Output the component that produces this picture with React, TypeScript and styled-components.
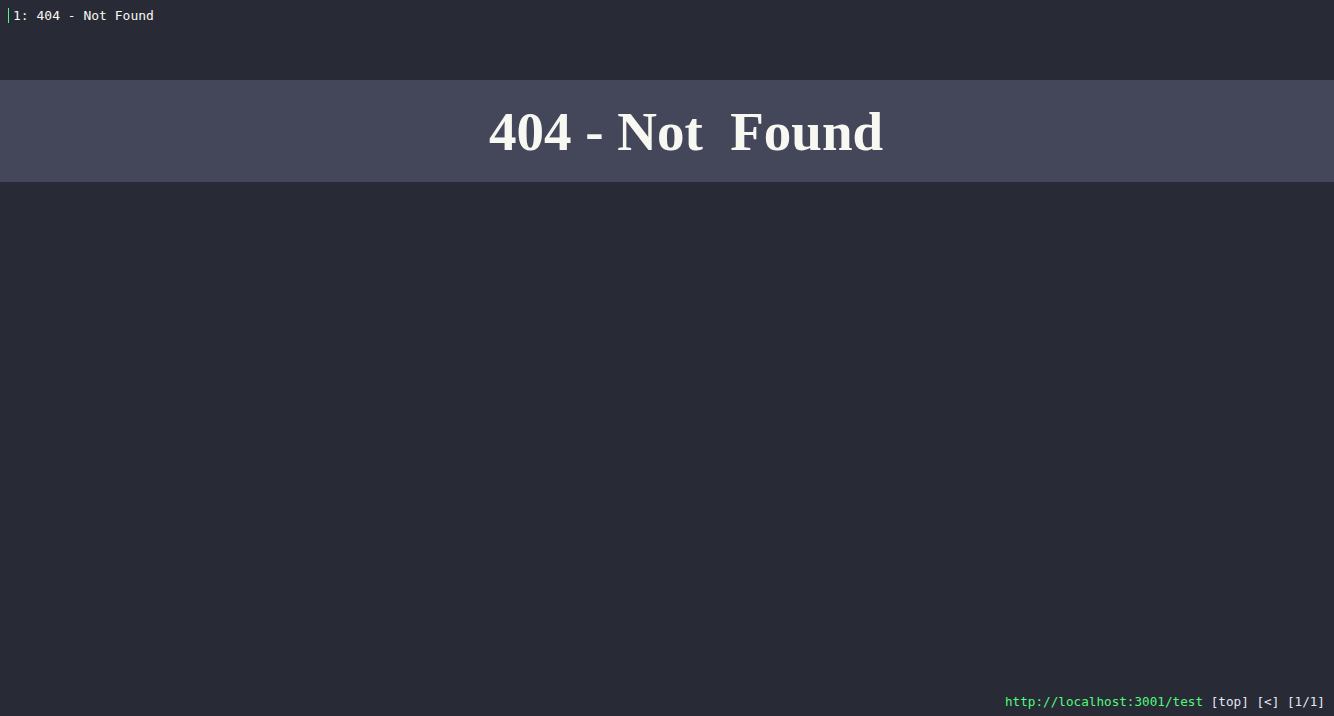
import styled, { createGlobalStyle } from 'styled-components'

const GlobalStyle = createGlobalStyle`
  html, body {
    margin: 0;
    padding: 0;
    height: 100%;
    background: #282a36;
  }
  #root {
    height: 100%;
  }
`

const Page = styled.div`
  height: 716px;
  display: flex;
  flex-direction: column;
  background: #282a36;
  color: #f8f8f2;
  overflow: hidden;
`

const TabBar = styled.div`
  height: 32px;
  display: flex;
  align-items: flex-start;
  padding: 8px 0 0 8px;
  box-sizing: border-box;
`

const Tab = styled.div`
  display: flex;
  align-items: center;
  height: 15px;
  border-left: 1px solid #50fa7b;
  padding-left: 4px;
  font-family: 'DejaVu Sans Mono', monospace;
  font-size: 13px;
  color: #f8f8f2;
`

const Content = styled.main`
  flex: 1;
  padding-top: 48px;
`

const Banner = styled.div`
  height: 102px;
  background: #44475a;
  display: flex;
  align-items: center;
  justify-content: center;
  padding-left: 38px;
`

const Title = styled.h1`
  margin: 0;
  font-family: 'Liberation Serif', 'Times New Roman', serif;
  font-weight: bold;
  font-size: 55px;
  line-height: 1;
  color: #f8f8f2;
  white-space: pre;
`

const StatusBar = styled.div`
  height: 30px;
  display: flex;
  justify-content: flex-end;
  align-items: center;
  padding-right: 9px;
  font-family: 'DejaVu Sans Mono', monospace;
  font-size: 12.67px;
  white-space: pre;
`

const StatusItem = styled.span<{ $url?: boolean }>`
  color: ${(p) => (p.$url ? '#50fa7b' : '#e2e6f4')};
`

const App = () => {
  return (
    <>
      <GlobalStyle />
      <Page>
        <TabBar>
          <Tab>1: 404 - Not Found</Tab>
        </TabBar>
        <Content>
          <Banner>
            <Title>404 - Not  Found</Title>
          </Banner>
        </Content>
        <StatusBar>
          <StatusItem $url>http://localhost:3001/test</StatusItem>
          <StatusItem> [top] [&lt;] [1/1]</StatusItem>
        </StatusBar>
      </Page>
    </>
  )
}

export default App
